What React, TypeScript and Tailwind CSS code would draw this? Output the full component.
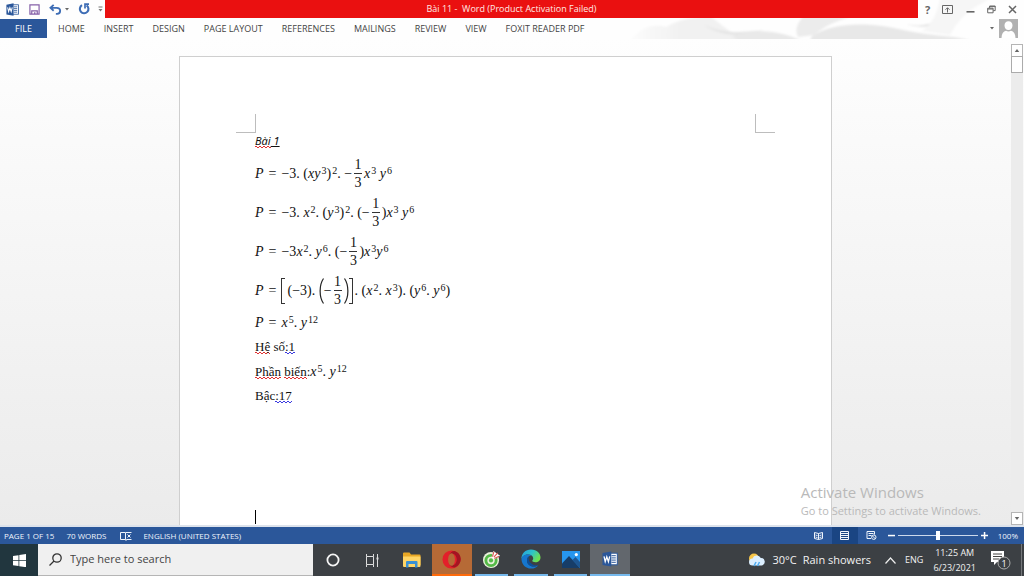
import type { ReactNode } from "react";

const tabs = ["HOME", "INSERT", "DESIGN", "PAGE LAYOUT", "REFERENCES", "MAILINGS", "REVIEW", "VIEW", "FOXIT READER PDF"];

function WordIcon({ className }: { className: string }) {
  return (
    <svg viewBox="0 0 16 16" className={className} aria-hidden="true">
      <rect x="8" y="2.2" width="7.3" height="11.6" fill="#fff" stroke="#2b579a" strokeWidth="1" />
      <path d="M9.5 4.7h4.3M9.5 6.9h4.3M9.5 9.1h4.3M9.5 11.3h4.3" stroke="#2b579a" strokeWidth="1" />
      <path d="M0.5 2 9.3 0.4v15.2L0.5 14z" fill="#2b579a" />
      <path d="M2 5.4 3.2 10.6 4.8 5.8 6.4 10.6 7.7 5.4" fill="none" stroke="#fff" strokeWidth="1.3" />
    </svg>
  );
}

function TitleBar() {
  return (
    <header className="z-10 flex h-[19px] items-start">
      <div className="flex h-[18px] w-[105px] shrink-0 items-center pl-[6px] text-[#3e6db5]">
        <WordIcon className="size-[13px]" />
        <button aria-label="Save" className="ml-[10px]">
          <svg viewBox="0 0 12 12" className="size-[11px]">
            <path d="M1 1h10v10H1z" fill="#fff" stroke="#8560a8" strokeWidth="1.3" />
            <path d="M3 11V7.500h6V11" fill="none" stroke="#8560a8" strokeWidth="1.3" />
            <path d="M5.500 9h1.5v2H5.500z" fill="#8560a8" />
          </svg>
        </button>
        <button aria-label="Undo" className="ml-[9px]">
          <svg viewBox="0 0 14 12" className="h-[11px] w-[13px]">
            <path d="M5 1 1.5 4.2 5 7.4M2 4.2h6.2c5.4 0 4.8 6.3.6 6.5H7.4" fill="none" stroke="currentColor" strokeWidth="2" />
          </svg>
        </button>
        <svg viewBox="0 0 4 3" className="ml-[3px] h-[3px] w-[4px]"><path d="M0 0h4L2 2.6z" fill="#666" /></svg>
        <button aria-label="Repeat" className="ml-[9px]">
          <svg viewBox="0 0 12 12" className="size-[12px]">
            <path d="M4 2.2a4.300 4.300 0 1 0 4.600.2" fill="none" stroke="currentColor" strokeWidth="2.100" />
            <path d="M7 5.600V1.200h4" fill="none" stroke="currentColor" strokeWidth="1.700" />
          </svg>
        </button>
        <svg viewBox="0 0 5 6" className="ml-[8px] h-[6px] w-[5px]"><path d="M.5.5h4v1h-4zM.5 3h4L2.5 5.5z" fill="#777" /></svg>
      </div>
      <div className="flex h-[18px] flex-1 items-center justify-center bg-[#ea1010] text-[9px] whitespace-pre text-[#ffe9e4]">
        {"Bài 11 -  Word (Product Activation Failed)"}
      </div>
      <div className="flex h-[18px] w-[106px] shrink-0 items-center justify-between pr-[7px] pl-[7px] text-[#666]">
        <button aria-label="Help" className="text-[11px] leading-none font-bold">?</button>
        <button aria-label="Ribbon display options">
          <svg viewBox="0 0 11 9" className="h-[9px] w-[11px]" fill="none" stroke="currentColor">
            <path d="M.5.5h10v8H.5zM5.5 7.500V3M3.500 4.700l2-2 2 2" />
          </svg>
        </button>
        <button aria-label="Minimize">
          <svg viewBox="0 0 9 9" className="size-[9px]"><path d="M.5 6h8v1.6h-8z" fill="currentColor" /></svg>
        </button>
        <button aria-label="Restore">
          <svg viewBox="0 0 9 9" className="size-[9px]" fill="none" stroke="currentColor">
            <path d="M.7 3.2h5.4v4.6H.7zM2.6 3V1h5.6v4.6H6.3M.7 4h5.4M2.6 1.6h5.6" />
          </svg>
        </button>
        <button aria-label="Close">
          <svg viewBox="0 0 9 9" className="size-[9px]" fill="none" stroke="currentColor" strokeWidth="1.5">
            <path d="m1 1 7 7M8 1 1 8" />
          </svg>
        </button>
      </div>
    </header>
  );
}

function Ribbon() {
  return (
    <nav className="relative flex h-[20px] items-start text-[9px] text-[#444]">
      <svg viewBox="0 0 404 40" className="absolute right-0 bottom-0 h-[40px] w-[404px]" aria-hidden="true">
        <defs>
          <linearGradient id="wash" x1="0" x2="1">
            <stop stopColor="#fcfcfc" />
            <stop offset=".3" stopColor="#f1f1f1" />
            <stop offset="1" stopColor="#f1f1f1" />
          </linearGradient>
          <filter id="soft"><feGaussianBlur stdDeviation="1.2" /></filter>
        </defs>
        <g filter="url(#soft)">
          <path d="M10 42C20 30 30 24 46 28 60 20 70 19 90 17L112 34C140 29 164 33 182 42z" fill="url(#wash)" />
          <path d="M84 26c18 8 36 9 60 5-20 8-44 6-60-5z" fill="#e4e4e4" />
          <path d="M112 37c24-6 50-6 68 5h-62z" fill="#e9e9e9" />
          <path d="M184 16h54c-18 4-32 10-44 20l-16 2c-4-8 0-14 6-22z" fill="#ececec" />
          <path d="M192 37c24-16 64-13 96-5 22 5 44 4 64 10H190z" fill="#e8e8e8" />
          <path d="M286 25c14 3 24 1 34-5-4 8-18 10-34 5z" fill="#e2e2e2" />
          <path d="M320 0h50c-20 10-30 18-40 36l-28-4c12-8 16-22 18-32z" fill="#f6f6f6" />
        </g>
      </svg>
      <button className="z-10 h-[19px] w-[47px] shrink-0 bg-[#2b579a] text-white">FILE</button>
      <div className="z-10 flex h-[19px] items-center gap-[19px] pl-[11px] whitespace-nowrap">
        {tabs.map((t) => (
          <button key={t}>{t}</button>
        ))}
      </div>
      <button aria-label="Account" className="z-10 mr-[6px] ml-auto flex items-center gap-[5px]">
        <svg viewBox="0 0 4 3" className="h-[3px] w-[4px]"><path d="M0 0h4L2 2.6z" fill="#666" /></svg>
        <svg viewBox="0 0 19 19" className="size-[19px]">
          <path d="M0 0h19v19H0z" fill="#b1b1b1" />
          <path d="M9.5 2.2c2.6 0 4 1.900 4 4.300s-1.500 4.600-4 4.600-4-2.200-4-4.600 1.400-4.300 4-4.300zM2.500 19c0-4 1.800-6.600 4.500-7.200 1.600 1 3.400 1 5 0 2.700.6 4.500 3.200 4.500 7.200z" fill="#fff" />
        </svg>
      </button>
    </nav>
  );
}

const V = ({ children }: { children: ReactNode }) => <i>{children}</i>;
const Sup = ({ children }: { children: ReactNode }) => (
  <span className="ml-px self-start text-[10px] leading-[12px]">{children}</span>
);
const Third = () => (
  <span className="mx-[2px] flex flex-col items-center leading-[17px]">
    <span className="w-[8px] border-b border-[#333] text-center">1</span>
    <span>3</span>
  </span>
);
const Group = ({ children }: { children: ReactNode }) => (
  <span className="flex h-[18px] items-center">{children}</span>
);
const Equals = () => (
  <>
    <V>P</V>
    <span className="mx-[5px]">=</span>
  </>
);

function Equation({ children, tall = false }: { children: ReactNode; tall?: boolean }) {
  return (
    <div className={`flex items-center text-[14px] whitespace-pre ${tall ? "h-[39px]" : "h-[25px]"}`}>
      {children}
    </div>
  );
}

const Red = ({ children }: { children: ReactNode }) => (
  <span className="bg-[repeating-linear-gradient(90deg,#e03030_0_2px,transparent_2px_4px),repeating-linear-gradient(90deg,transparent_0_2px,#e03030_2px_4px)] bg-[length:100%_1px] bg-[position:0_calc(100%_-_1px),0_100%] bg-no-repeat">
    {children}
  </span>
);
const Blue = ({ children }: { children: ReactNode }) => (
  <span className="bg-[repeating-linear-gradient(90deg,#3a3ae0_0_2px,transparent_2px_4px),repeating-linear-gradient(90deg,transparent_0_2px,#3a3ae0_2px_4px)] bg-[length:100%_1px] bg-[position:0_calc(100%_-_1px),0_100%] bg-no-repeat">
    {children}
  </span>
);

function Page() {
  return (
    <article className="mx-auto flex w-[653px] max-w-full flex-col border border-b-0 border-[#cfcfcf] bg-white pt-[57px] text-[#111]">
      <div className="flex justify-between px-[56px]">
        <span className="h-[19px] w-[20px] border-r border-b border-[#bdbdbd]" />
        <span className="h-[19px] w-[20px] border-b border-l border-[#bdbdbd]" />
      </div>
      <div className="flex flex-1 flex-col px-[75px] font-['Liberation_Serif',serif] text-[13px]">
        <h1 className="mb-[5px] h-[16px] font-['Noto_Sans',sans-serif] text-[11px] leading-[16px] italic">
          <Red>Bài</Red><span className="underline"> 1</span>
        </h1>
        <Equation tall>
          <Equals />
          <Group>−3. (<V>xy</V><Sup>3</Sup>)<Sup>2</Sup>. −</Group>
          <Third />
          <Group><V>x</V><Sup>3</Sup><V> y</V><Sup>6</Sup></Group>
        </Equation>
        <Equation tall>
          <Equals />
          <Group>−3. <V>x</V><Sup>2</Sup>. (<V>y</V><Sup>3</Sup>)<Sup>2</Sup>. (−</Group>
          <Third />
          <Group>)<V>x</V><Sup>3</Sup><V> y</V><Sup>6</Sup></Group>
        </Equation>
        <Equation tall>
          <Equals />
          <Group>−3<V>x</V><Sup>2</Sup>. <V>y</V><Sup>6</Sup>. (−</Group>
          <Third />
          <Group>)<V>x</V><Sup>3</Sup><V>y</V><Sup>6</Sup></Group>
        </Equation>
        <Equation tall>
          <Equals />
          <span className="mr-[2px] h-[26px] w-[4px] border border-r-0 border-[#333]" />
          <Group>(−3). </Group>
          <svg viewBox="0 0 5 26" className="h-[26px] w-[5px]"><path d="M4.500.5C0 7 0 19 4.500 25.500" fill="none" stroke="#222" strokeWidth="1.200" /></svg>
          <Group>−</Group>
          <Third />
          <svg viewBox="0 0 5 26" className="h-[26px] w-[5px]"><path d="M.5.5C5 7 5 19 .5 25.500" fill="none" stroke="#222" strokeWidth="1.200" /></svg>
          <span className="mr-[2px] h-[26px] w-[4px] border border-l-0 border-[#333]" />
          <Group>. (<V>x</V><Sup>2</Sup>. <V>x</V><Sup>3</Sup>). (<V>y</V><Sup>6</Sup>. <V>y</V><Sup>6</Sup>)</Group>
        </Equation>
        <Equation>
          <Equals />
          <Group><V>x</V><Sup>5</Sup>. <V>y</V><Sup>12</Sup></Group>
        </Equation>
        <p className="h-[24px] leading-[24px]"><Red>Hệ</Red> số<Blue>:1</Blue></p>
        <div className="flex h-[25px] items-center">
          <span><Red>Phần</Red> <Red>biến</Red>:</span>
          <Equation>
            <Group><V>x</V><Sup>5</Sup>. <V>y</V><Sup>12</Sup></Group>
          </Equation>
        </div>
        <p className="h-[24px] leading-[24px]">Bậc<Blue>:17</Blue></p>
        <span className="mt-auto mb-px h-[14px] w-px bg-black" />
      </div>
    </article>
  );
}

function Workspace() {
  return (
    <main className="relative flex min-h-0 flex-1 border-b-2 border-[#dde3ec] bg-linear-to-b from-[#fefefe] to-[#ebebeb]">
      <div className="flex min-w-0 flex-1 pt-[17px]">
        <Page />
      </div>
      <div className="mt-[5px] mr-px flex w-[12px] shrink-0 flex-col bg-[#ececec]">
        <button aria-label="Scroll up" className="flex h-[13px] items-center justify-center border border-[#b5b5b5] bg-white">
          <svg viewBox="0 0 6 4" className="h-[3px] w-[6px]"><path d="M0 4h6L3 0z" fill="#666" /></svg>
        </button>
        <div className="-mt-px h-[17px] border border-[#ababab] bg-white" />
        <button aria-label="Scroll down" className="mt-auto flex h-[13px] items-center justify-center border border-[#b5b5b5] bg-white">
          <svg viewBox="0 0 6 4" className="h-[3px] w-[6px]"><path d="M0 0h6L3 4z" fill="#666" /></svg>
        </button>
      </div>
      <div className="absolute right-[43px] bottom-[6px] text-[#b9b9b9]">
        <p className="text-[15px] leading-[22px]">Activate Windows</p>
        <p className="text-[11px] leading-[16px]">Go to Settings to activate Windows.</p>
      </div>
    </main>
  );
}

function StatusBar() {
  return (
    <footer className="flex h-[17px] items-center bg-[#2b579a] pl-[4px] text-[8px] whitespace-nowrap text-[#f0f5fc]">
      <span>PAGE 1 OF 15</span>
      <span className="ml-[12px]">70 WORDS</span>
      <svg viewBox="0 0 12 10" className="ml-[14px] h-[10px] w-[12px]" fill="none" stroke="currentColor">
        <path d="M5.500 1.500H.5v7h5l.5 1 .5-1h5M5.500 1.500v7M6 1.500h5.500M7.500 3.500l3 3M10.500 3.500l-3 3" />
      </svg>
      <span className="ml-[11px]">ENGLISH (UNITED STATES)</span>
      <div className="ml-auto flex h-full items-center">
        <button aria-label="Read mode" className="mr-[9px]">
          <svg viewBox="0 0 9 9" className="size-[9px]" fill="none" stroke="currentColor">
            <path d="M.5 1.500 4.500 2.500l4-1v6l-4 1-4-1zM4.500 2.500v6M1.500 4l2 .6M1.500 6l2 .6M5.500 4.600l2-.6M5.500 6.600l2-.6" />
          </svg>
        </button>
        <button aria-label="Print layout" className="flex h-full w-[26px] items-center justify-center bg-[#1a4583]">
          <svg viewBox="0 0 9 9" className="size-[9px]" fill="none" stroke="currentColor">
            <path d="M.5.5h8v8h-8zM1 2.500h7M1 4.500h7M1 6.500h7" />
          </svg>
        </button>
        <button aria-label="Web layout" className="ml-[8px]">
          <svg viewBox="0 0 11 9" className="h-[9px] w-[11px]" fill="none" stroke="currentColor">
            <path d="M5 7.500H1v-7h7.500v3M2.500 2.500h5M2.500 4.500h3" />
            <circle cx="7.800" cy="6.200" r="2.200" /><path d="m6.300 4.800 3 3" />
          </svg>
        </button>
        <button aria-label="Zoom out" className="mr-[3px] ml-[11px]">
          <svg viewBox="0 0 7 7" className="size-[7px]"><path d="M0 2.800h7v1.500H0z" fill="#fff" /></svg>
        </button>
        <input
          type="range"
          aria-label="Zoom"
          min={0}
          max={200}
          defaultValue={100}
          className="h-[10px] w-[80px] appearance-none bg-[linear-gradient(#cdd9ec,#cdd9ec)] bg-[length:100%_1px] bg-center bg-no-repeat [&::-webkit-slider-thumb]:h-[9px] [&::-webkit-slider-thumb]:w-[4px] [&::-webkit-slider-thumb]:appearance-none [&::-webkit-slider-thumb]:bg-white"
        />
        <button aria-label="Zoom in" className="ml-[3px]">
          <svg viewBox="0 0 7 7" className="size-[7px]"><path d="M0 2.800h2.800V0h1.500v2.800H7v1.500H4.300V7H2.800V4.300H0z" fill="#fff" /></svg>
        </button>
        <span className="mr-[6px] ml-[10px]">100%</span>
      </div>
    </footer>
  );
}

function TaskItem({ label, className = "", children }: { label: string; className?: string; children: ReactNode }) {
  return (
    <button aria-label={label} className={`flex items-center justify-center ${className}`}>
      {children}
    </button>
  );
}

function Taskbar() {
  return (
    <footer className="flex h-[32px] bg-[#3c4044] text-[11px] whitespace-nowrap text-[#f2f2f2]">
      <button aria-label="Start" className="flex w-[38px] shrink-0 items-center justify-center bg-[#21363e]">
        <svg viewBox="0 0 13 13" className="size-[13px]">
          <path d="M0 2l5.500-.8v5H0zM6.300 1.100 13 0v6.200H6.300zM0 7h5.500v5L0 11.200zM6.300 7H13v6.200l-6.700-1z" fill="#fff" />
        </svg>
      </button>
      <label className="flex w-[275px] items-center border-b border-[#b5b5b5] bg-[#f0f0f0] pl-[11px] text-[#333]">
        <svg viewBox="0 0 13 13" className="mr-[8px] size-[13px] shrink-0" fill="none" stroke="#333" strokeWidth="1.300">
          <circle cx="8" cy="5" r="4.200" /><path d="m5 8-4.500 4.500" />
        </svg>
        <input aria-label="Search" placeholder="Type here to search" className="w-full bg-transparent text-[11px] outline-none placeholder:text-[#444]" />
      </label>
      <div className="grid w-[317px] shrink-0 grid-cols-8">
        <TaskItem label="Cortana">
          <svg viewBox="0 0 14 14" className="size-[14px]"><circle cx="7" cy="7" r="5.600" fill="none" stroke="#f5f5f5" strokeWidth="1.800" /></svg>
        </TaskItem>
        <TaskItem label="Task view">
          <svg viewBox="0 0 14 13" className="h-[13px] w-[14px]" fill="none" stroke="#ddd">
            <path d="M1.500 0v2.500h7V0M1.500 2.500v8M8.500 2.500v8M1.500 13v-2.500h7V13M12.500 0v13" /><path d="M11.500 3.500h2v2h-2z" fill="#ddd" stroke="none" />
          </svg>
        </TaskItem>
        <TaskItem label="File Explorer">
          <svg viewBox="0 0 18 16" className="h-[16px] w-[18px]">
            <path d="M0 1.500Q0 .5 1 .5h5.500l1.500 2h8.500q1 0 1 1V13H0z" fill="#e9a825" />
            <path d="M0 4.500h17.500V14q0 1-1 1H1q-1 0-1-1z" fill="#ffd566" />
            <path d="M3 15.500V10q0-1 1-1h9.500q1 0 1 1v5.500H12V12H5.500v3.500z" fill="#3a91d4" />
          </svg>
        </TaskItem>
        <TaskItem label="Opera" className="border-b-2 border-[#ff6a0a] bg-[#b66a36]">
          <svg viewBox="0 0 20 20" className="size-[19px]">
            <circle cx="10" cy="10" r="9.500" fill="#e3202a" />
            <path d="M13 1c6 1.500 8.500 8 5.500 13-1.200 2.200-3 3.800-5.500 4.500-2.500 0-4.500-1.500-5.500-3.500 5 3 8-1 8-5s-3-8-8-5c1-2 3-4 5.500-4z" fill="#a31522" />
            <ellipse cx="10" cy="10" rx="3.600" ry="6.700" fill="#b66a36" />
          </svg>
        </TaskItem>
        <TaskItem label="Browser" className="mx-[3px] border-b-2 border-[#76b9ed]">
          <svg viewBox="0 0 20 20" className="size-[19px]">
            <circle cx="9.500" cy="10.500" r="8.500" fill="#e9f1dc" />
            <circle cx="9.500" cy="11" r="5.400" fill="none" stroke="#54b948" strokeWidth="3" />
            <circle cx="9.500" cy="11" r="2.200" fill="#54b948" />
            <path d="m10 8 2-7 7 5-6 4z" fill="#fff" />
            <path d="m11 7 1.500-5M12.500 7.500l4-4.500M13 9l5-2.500" stroke="#d85550" strokeWidth="1.200" />
          </svg>
        </TaskItem>
        <TaskItem label="Edge" className="mx-[3px] border-b-2 border-[#76b9ed]">
          <svg viewBox="0 0 20 20" className="size-[20px]">
            <defs>
              <linearGradient id="edgeTop" x1="0" y1="0" x2="1" y2=".5"><stop stopColor="#249de5" /><stop offset=".55" stopColor="#2dc3c8" /><stop offset="1" stopColor="#6fe04f" /></linearGradient>
            </defs>
            <path d="M.5 10.500C0 4.500 4.500.5 10 .5c6 0 9.500 4 9.500 8 0 3-2.200 4.800-5 4.800-2.200 0-3.300-.8-3.300-1.500 0-.6 1-1 1-2.600C12.200 7 10 5.500 7 5.500 3 5.500.8 8 .5 10.500z" fill="url(#edgeTop)" />
            <path d="M.5 10.500C.8 7.500 3 5.500 7 5.500c1.500 0 2.800.4 3.700 1C7.500 6.500 6 9 6 11.500c0 3.500 3 6 6.500 6 2 0 3.500-.6 4.800-1.300C15.500 18.500 13 19.700 10 19.600 4.500 19.500.8 15.500.5 10.500z" fill="#1677cf" />
            <path d="M7.800 7.500C6.500 8.500 6 10 6 11.500c0 3.500 3 6 6.500 6 2 0 3.500-.6 4.800-1.300-6 1-10.500-3.200-9.500-8.700z" fill="#0c4e99" />
          </svg>
        </TaskItem>
        <TaskItem label="Photos" className="mx-[3px] border-b-2 border-[#76b9ed]">
          <svg viewBox="0 0 18 17" className="h-[17px] w-[18px]">
            <path d="M0 0h18v17H0z" fill="#2796ee" />
            <path d="M0 12.500 7 5l11 12H0z" fill="#173d68" /><path d="m10.500 9 3-3L18 11v6z" fill="#1e5691" />
            <circle cx="14.300" cy="3.600" r="1.600" fill="#fff" />
          </svg>
        </TaskItem>
        <TaskItem label="Word" className="border-b-2 border-[#76b9ed] bg-[#62676d]">
          <WordIcon className="size-[16px]" />
        </TaskItem>
      </div>
      <div className="ml-auto flex items-center">
        <svg viewBox="0 0 18 15" className="h-[15px] w-[18px]">
          <circle cx="6" cy="5.500" r="5" fill="#f7c64a" />
          <path d="M4.500 12.500a3.500 3.500 0 0 1 0-7 4.500 4.500 0 0 1 8.300-.5 3.800 3.800 0 0 1 1 7.500z" fill="#dcefff" />
          <path d="m8 9-2 4M11.500 9l-2 4" stroke="#53aef0" strokeWidth="1.600" />
        </svg>
        <span className="ml-[7px]">30°C</span>
        <span className="ml-[6px]">Rain showers</span>
        <button aria-label="Show hidden icons" className="ml-[14px]">
          <svg viewBox="0 0 11 7" className="h-[7px] w-[11px]" fill="none" stroke="#eee" strokeWidth="1.200"><path d="m.5 6.500 5-5.500 5 5.500" /></svg>
        </button>
        <span className="ml-[9px] text-[9px]">ENG</span>
        <div className="ml-[10px] text-center text-[9px] leading-[15px]">
          <p>11:25 AM</p>
          <p>6/23/2021</p>
        </div>
        <button aria-label="Notifications" className="mr-[10px] ml-[14px]">
          <svg viewBox="0 0 21 20" className="h-[20px] w-[21px]">
            <path d="M1 1h13v11H7l-3 3v-3H1z" fill="#fff" />
            <path d="M3 4h9M3 6.500h9M3 9h6" stroke="#444" />
            <circle cx="14" cy="13" r="6" fill="#3c4044" stroke="#aaa" />
            <text x="14" y="16.500" fontSize="9" fill="#fff" textAnchor="middle">1</text>
          </svg>
        </button>
        <span className="mr-[2px] h-[32px] w-px bg-[#75787b]" />
      </div>
    </footer>
  );
}

export default function App() {
  return (
    <div className="flex h-screen flex-col overflow-hidden bg-[#fefefe] font-['Open_Sans',sans-serif]">
      <TitleBar />
      <Ribbon />
      <Workspace />
      <StatusBar />
      <Taskbar />
    </div>
  );
}
